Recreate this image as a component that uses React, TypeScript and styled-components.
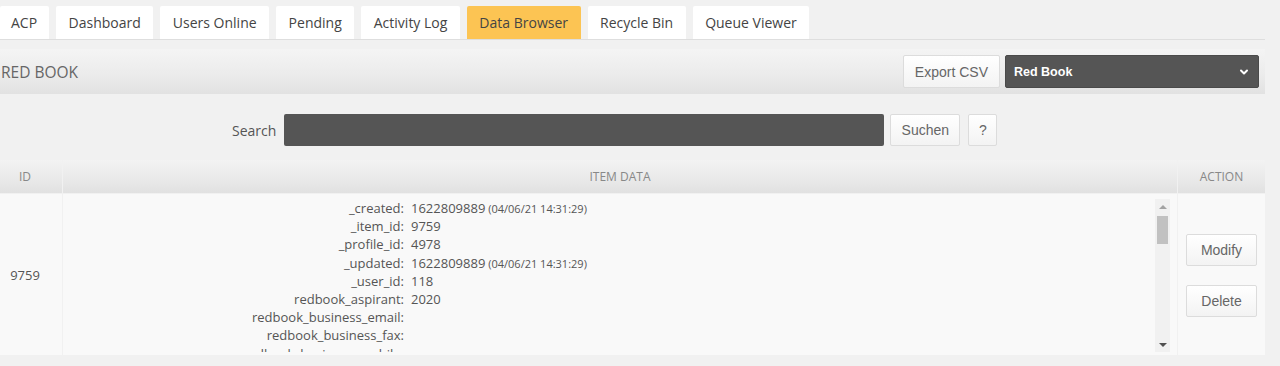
import { ChevronDown } from 'lucide-react'
import styled, { createGlobalStyle } from 'styled-components'

const tabs = ['ACP', 'Dashboard', 'Users Online', 'Pending', 'Activity Log', 'Data Browser', 'Recycle Bin', 'Queue Viewer']

type Field = { key: string, value?: string, date?: string }

const fields: Field[] = [
  { key: '_created', value: '1622809889', date: '(04/06/21 14:31:29)' },
  { key: '_item_id', value: '9759' },
  { key: '_profile_id', value: '4978' },
  { key: '_updated', value: '1622809889', date: '(04/06/21 14:31:29)' },
  { key: '_user_id', value: '118' },
  { key: 'redbook_aspirant', value: '2020' },
  { key: 'redbook_business_email' },
  { key: 'redbook_business_fax' },
  { key: 'redbook_business_mobile' },
  { key: 'redbook_business_phone' },
  { key: 'redbook_business_street' },
  { key: 'redbook_business_town' },
  { key: 'redbook_business_website' },
  { key: 'redbook_business_zip' },
  { key: 'redbook_company' },
  { key: 'redbook_country' },
  { key: 'redbook_department' },
  { key: 'redbook_firstname' },
  { key: 'redbook_function' },
  { key: 'redbook_lastname' },
  { key: 'redbook_membership' },
  { key: 'redbook_note' },
  { key: 'redbook_private_email' },
  { key: 'redbook_private_mobile' },
  { key: 'redbook_private_phone' },
  { key: 'redbook_private_street' },
  { key: 'redbook_private_town' },
  { key: 'redbook_private_zip' },
  { key: 'redbook_salutation' },
  { key: 'redbook_section' },
  { key: 'redbook_title' },
  { key: 'redbook_year' },
]

export default function App() {
  return (
    <>
      <GlobalStyle />
      <Page>
        <TabBar>
          {tabs.map(t => (
            <Tab key={t} $active={t === 'Data Browser'}>{t}</Tab>
          ))}
        </TabBar>

        <TitleBar>
          <Title>RED BOOK</Title>
          <TitleTools>
            <Button>Export CSV</Button>
            <Select>
              <span>Red Book</span>
              <ChevronDown size={12} strokeWidth={4} />
            </Select>
          </TitleTools>
        </TitleBar>

        <SearchRow>
          <SearchLabel>Search</SearchLabel>
          <SearchInput />
          <Button $width={70}>Suchen</Button>
          <Button $width={29}>?</Button>
        </SearchRow>

        <Table>
          <HeadCell $offset={12}>ID</HeadCell>
          <HeadCell>Item Data</HeadCell>
          <HeadCell>Action</HeadCell>

          <IdCell>9759</IdCell>
          <DataCell>
            <DataList>
              {fields.map(f => (
                <FieldRow key={f.key}>
                  <FieldKey>{f.key}:</FieldKey>
                  <FieldValue>
                    {f.value}
                    {f.date && <small> {f.date}</small>}
                  </FieldValue>
                </FieldRow>
              ))}
            </DataList>
            <ScrollBar>
              <Arrow $dir="up" />
              <Track>
                <Thumb />
              </Track>
              <Arrow $dir="down" />
            </ScrollBar>
          </DataCell>
          <ActionCell>
            <ActionButton>Modify</ActionButton>
            <ActionButton>Delete</ActionButton>
          </ActionCell>
        </Table>
      </Page>
    </>
  )
}

const GlobalStyle = createGlobalStyle`
  html, body {
    margin: 0;
    padding: 0;
    background: #f1f1f1;
    font-family: "Open Sans", "Liberation Sans", sans-serif;
    color: #555;
  }
`

const Page = styled.div`
  width: 1265px;
  padding-top: 6px;
`

const TabBar = styled.div`
  display: flex;
  gap: 7px;
  border-bottom: 1px solid #dedede;
`

const Tab = styled.div<{ $active?: boolean }>`
  height: 33px;
  padding: 0 12.5px;
  display: flex;
  align-items: center;
  font-size: 14px;
  color: #444;
  background: ${p => p.$active ? '#fcc453' : '#fff'};
  border-radius: 2px 2px 0 0;

  &:first-child {
    padding: 0 12px 0 11px;
  }
`

const TitleBar = styled.div`
  margin-top: 9px;
  height: 45px;
  padding-right: 6px;
  display: flex;
  align-items: center;
  justify-content: space-between;
  background: linear-gradient(to bottom, #f4f4f4 0%, #ebebeb 60%, #e2e2e2 100%);
`

const Title = styled.div`
  font-size: 15.5px;
  color: #666;
  padding-left: 1px;
`

const TitleTools = styled.div`
  display: flex;
  gap: 5px;
`

const Button = styled.button<{ $width?: number }>`
  height: 33px;
  width: ${p => p.$width ? `${p.$width}px` : 'auto'};
  padding: 0 ${p => p.$width ? '0' : '11px'};
  border: 1px solid #dcdcdc;
  border-radius: 2px;
  background: linear-gradient(to bottom, #ffffff 0%, #f3f3f3 100%);
  font-family: "Liberation Sans", Arial, sans-serif;
  font-size: 14px;
  color: #666;
  cursor: pointer;
`

const Select = styled.div`
  width: 254px;
  height: 33px;
  box-sizing: border-box;
  padding: 0 8px;
  display: flex;
  align-items: center;
  justify-content: space-between;
  background: #555;
  border: 1px solid #4a4a4a;
  border-radius: 2px;
  color: #fff;
  font-family: "Liberation Sans", Arial, sans-serif;
  font-size: 12.5px;
  font-weight: 700;
`

const SearchRow = styled.div`
  height: 32px;
  margin: 20px 0 14px;
  padding-left: 232px;
  display: flex;
  align-items: center;
  gap: 7px;

  & > button {
    height: 32px;
  }
  & > button:last-child {
    margin-left: 1px;
  }
`

const SearchLabel = styled.label`
  font-size: 14px;
  color: #555;
  margin-right: 1px;
`

const SearchInput = styled.div`
  width: 600px;
  height: 32px;
  background: #555;
  border-radius: 2px;
  margin-right: -1px;
`

const Table = styled.div`
  display: grid;
  grid-template-columns: 62px 1fr 87px;
  grid-template-rows: 33px 161px;
  column-gap: 1px;
  row-gap: 1px;
`

const HeadCell = styled.div<{ $offset?: number }>`
  display: flex;
  align-items: center;
  justify-content: center;
  padding-right: ${p => p.$offset ?? 0}px;
  font-size: 12px;
  text-transform: uppercase;
  color: #888;
  background: linear-gradient(to bottom, #f3f3f3 0%, #e9e9e9 60%, #e1e1e1 100%);
`

const BodyCell = styled.div`
  background: #f9f9f9;
`

const IdCell = styled(BodyCell)`
  display: flex;
  align-items: center;
  justify-content: center;
  padding-right: 12px;
  font-size: 13px;
  color: #555;
`

const DataCell = styled(BodyCell)`
  display: flex;
  padding: 5px 7px 3px 5px;
`

const DataList = styled.div`
  flex: 1;
  height: 153px;
  overflow: hidden;
  font-size: 13px;
  line-height: 18.2px;
  color: #555;
`

const FieldRow = styled.div`
  display: grid;
  grid-template-columns: 336px 1fr;
  column-gap: 7px;
  height: 18.2px;
`

const FieldKey = styled.div`
  text-align: right;
  white-space: nowrap;
`

const FieldValue = styled.div`
  white-space: nowrap;

  small {
    font-size: 11px;
    line-height: 1;
  }
`

const ScrollBar = styled.div`
  width: 15px;
  height: 153px;
  display: flex;
  flex-direction: column;
  background: #f1f1f1;
`

const Arrow = styled.div<{ $dir: 'up' | 'down' }>`
  height: 15px;
  display: flex;
  align-items: center;
  justify-content: center;

  &::before {
    content: '';
    border-left: 4px solid transparent;
    border-right: 4px solid transparent;
    ${p => p.$dir === 'up'
      ? 'border-bottom: 4px solid #a3a3a3;'
      : 'border-top: 4px solid #505050;'}
  }
`

const Track = styled.div`
  flex: 1;
  padding: 2px 2px 0;
`

const Thumb = styled.div`
  height: 28px;
  background: #c1c1c1;
`

const ActionCell = styled(BodyCell)`
  display: flex;
  flex-direction: column;
  align-items: center;
  padding-top: 40px;
  gap: 19px;
`

const ActionButton = styled(Button)`
  width: 71px;
  height: 32px;
  padding: 0;
`
